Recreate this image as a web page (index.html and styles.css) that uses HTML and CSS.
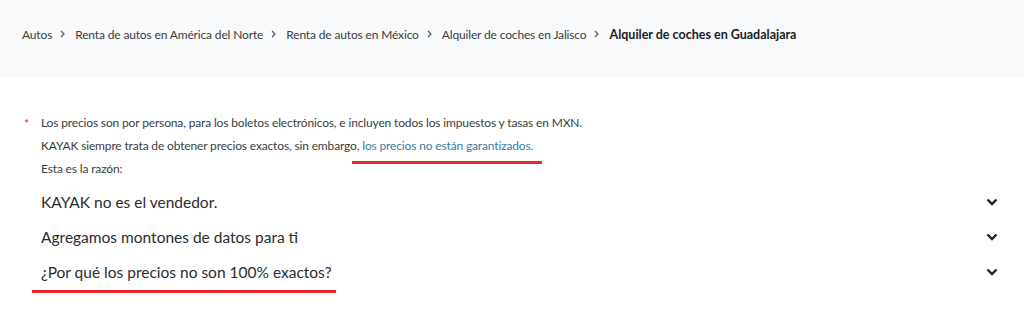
FILE: index.html
```html
<!DOCTYPE html>
<html lang="es">
<head>
<meta charset="utf-8">
<link rel="stylesheet" href="styles.css">
</head>
<body>
<nav class="crumbs">
  <a class="crumb">Autos</a><svg class="sep" viewBox="0 0 5 8"><path d="M1 1l3 3-3 3"/></svg>
  <a class="crumb">Renta de autos en América del Norte</a><svg class="sep" viewBox="0 0 5 8"><path d="M1 1l3 3-3 3"/></svg>
  <a class="crumb">Renta de autos en México</a><svg class="sep" viewBox="0 0 5 8"><path d="M1 1l3 3-3 3"/></svg>
  <a class="crumb">Alquiler de coches en Jalisco</a><svg class="sep" viewBox="0 0 5 8"><path d="M1 1l3 3-3 3"/></svg>
  <span class="crumb current">Alquiler de coches en Guadalajara</span>
</nav>
<section class="notes">
  <div class="note">
    <span class="star">*</span>
    <div class="note-text">
      <p>Los precios son por persona, para los boletos electrónicos, e incluyen todos los impuestos y tasas en MXN.</p>
      <p>KAYAK siempre trata de obtener precios exactos, sin embargo, <span class="link marked">los precios no están garantizados.</span></p>
      <p>Esta es la razón:</p>
    </div>
  </div>
  <div class="faq">
    <div class="faq-row"><span>KAYAK no es el vendedor.</span><svg class="chev" viewBox="0 0 12 8"><path d="M1.5 1.5 6 6l4.5-4.5"/></svg></div>
    <div class="faq-row"><span>Agregamos montones de datos para ti</span><svg class="chev" viewBox="0 0 12 8"><path d="M1.5 1.5 6 6l4.5-4.5"/></svg></div>
    <div class="faq-row"><span class="marked2">¿Por qué los precios no son 100% exactos?<i class="mark-line"></i></span><svg class="chev" viewBox="0 0 12 8"><path d="M1.5 1.5 6 6l4.5-4.5"/></svg></div>
  </div>
</section>
</body>
</html>
```
FILE: styles.css
```css
* { box-sizing: border-box; }
html, body { margin: 0; padding: 0; background: #fff; }
body { font-family: Lato, "Noto Sans", sans-serif; color: #2f3136; min-height: 311px; }
.crumbs {
  background: #f8f9fb;
  height: 77px;
  padding: 0 22px;
  display: flex;
  align-items: center;
  padding-bottom: 9px;
  font-size: 12px;
  letter-spacing: -0.15px;
  color: #3a3d42;
}
.crumb { color: #3a3d42; text-decoration: none; }
.crumb.current { font-weight: 700; color: #1a1c1f; font-size: 12.5px; letter-spacing: 0; }
.sep { width: 5px; height: 8px; margin: 0 10px 0 8px; fill: none; stroke: #555a60; stroke-width: 1.2; }
.notes { padding: 34px 22px 24px 24px; }
.note { display: flex; gap: 10px; }
.star { color: #e0313c; font-size: 12px; width: 7px; line-height: 23px; position: relative; top: 1px; }
.note-text { font-size: 12px; letter-spacing: -0.15px; color: #3a3d42; }
.note-text p { margin: 0; line-height: 23px; }
.link { color: #3a7ba0; }
.marked { position: relative; }
.marked::after {
  content: ""; position: absolute; left: -10px; right: -9px; bottom: -11px; height: 3px; background: #e8262c;
}
.faq { padding: 4px 0 0 17px; }
.faq-row {
  display: flex; justify-content: space-between; align-items: center;
  height: 35px; font-size: 15.5px; color: #2a2c30;
}
.marked2 { position: relative; }
.mark-line { position: absolute; left: -9px; right: -4px; bottom: -12px; height: 3px; background: #e8262c; }
.chev { width: 12px; height: 8px; fill: none; stroke: #1f2226; stroke-width: 2.4; margin-right: 4px; }
```
